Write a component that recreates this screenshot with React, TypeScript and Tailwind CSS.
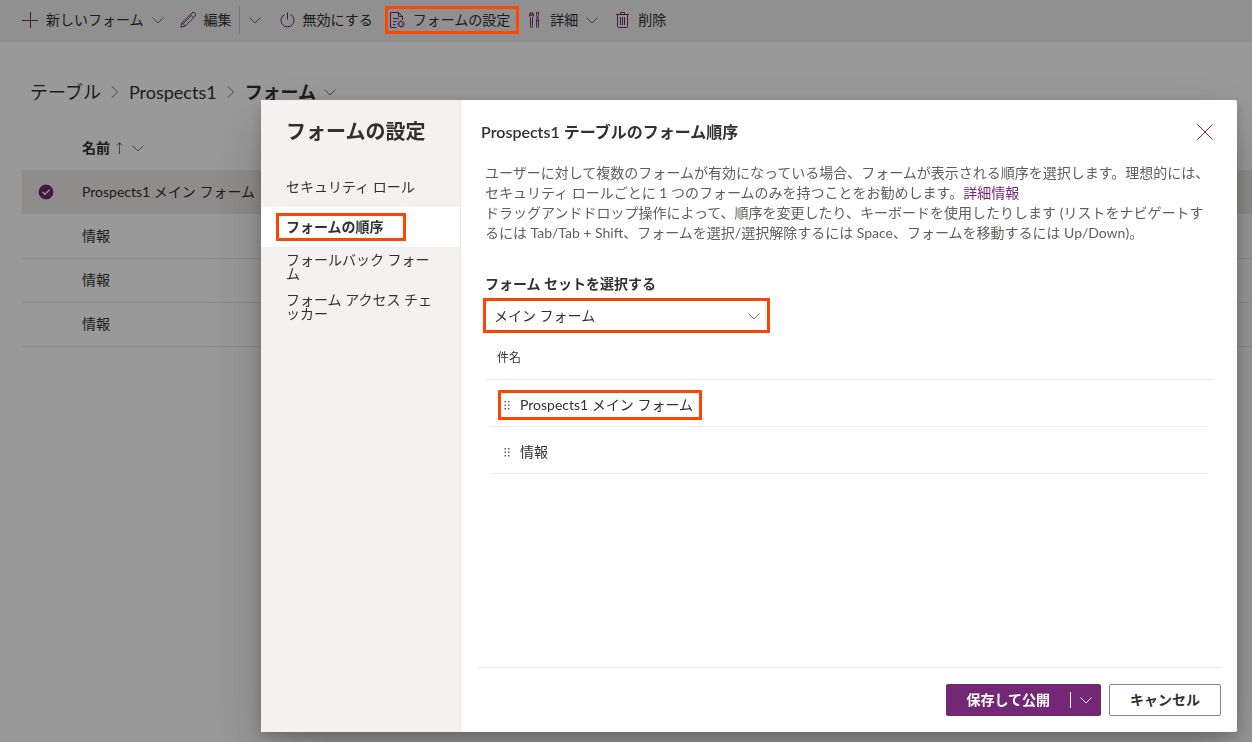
import React, { useState } from 'react';

const NAV_ITEMS = ['セキュリティ ロール', 'フォームの順序', 'フォールバック フォーム', 'フォーム アクセス チェッカー'];
const TABLE_FORMS = ['Prospects1 メイン フォーム', '情報', '情報', '情報'];
const ORDER = ['Prospects1 メイン フォーム', '情報'];

// Orange callout frame drawn above whatever it marks
function Callout({ className }: { className: string }) {
  return <span aria-hidden="true" className={`pointer-events-none absolute z-20 border-3 border-[#ff4500] ${className}`} />;
}

function Icon({ children, className = 'size-4' }: { children: React.ReactNode; className?: string }) {
  return (
    <svg viewBox="0 0 16 16" fill="none" stroke="currentColor" strokeWidth="1" className={`shrink-0 ${className}`} aria-hidden="true">
      {children}
    </svg>
  );
}

function Chevron({ className = 'text-[#797775]' }: { className?: string }) {
  return (
    <svg viewBox="0 0 12 12" fill="none" stroke="currentColor" className={`size-3 shrink-0 ${className}`} aria-hidden="true">
      <path d="M.5 3.5 6 9l5.5-5.5" />
    </svg>
  );
}

function CrumbArrow() {
  return (
    <svg viewBox="0 0 8 12" fill="none" stroke="currentColor" className="h-3 w-2 shrink-0 text-[#797775]" aria-hidden="true">
      <path d="M1 .5 6.5 6 1 11.5" />
    </svg>
  );
}

function DragDots() {
  return (
    <svg viewBox="0 0 6 10" fill="currentColor" className="h-2.5 w-1.5 shrink-0 text-[#605e5c]" aria-hidden="true">
      <path d="M.5 1h1.500v1.500H.5zM4 1h1.500v1.500H4zM.5 4.500h1.500V6H.5zM4 4.500h1.500V6H4zM.5 8h1.500v1.500H.5zM4 8h1.500v1.500H4z" />
    </svg>
  );
}

function CommandButton({ icon, label, menu }: { icon: React.ReactNode; label: string; menu?: boolean }) {
  return (
    <button type="button" className="flex h-7 items-center gap-2 px-2 whitespace-nowrap">
      <span className="flex text-[#742774]">{icon}</span>
      {label}
      {menu && <Chevron />}
    </button>
  );
}

function CommandBar() {
  return (
    <header className="flex h-[42px] items-center bg-[#f1f0f0] px-3.5 pb-0.5">
      <CommandButton label="新しいフォーム" menu icon={<Icon><path d="M8.5 0v16M0 8.5h16" /></Icon>} />
      <CommandButton
        label="編集"
        icon={
          <Icon>
            <path d="M.8 15.2 2 10.7 11.7 1a1.9 1.9 0 0 1 2.7 0l.6.6a1.9 1.9 0 0 1 0 2.7L5.3 14 .8 15.2zM2 10.7 5.3 14M10.3 2.4l3.3 3.3M3.2 11.8l8.7-8.7" />
          </Icon>
        }
      />
      <button type="button" aria-label="編集オプション" className="-ml-px flex h-7 w-8 items-center justify-center border-l border-[#c8c6c4]">
        <Chevron />
      </button>
      <CommandButton
        label="無効にする"
        icon={<Icon><path d="M8.500 .5v7M5.500 2.600a6.500 6.500 0 1 0 6 0" /></Icon>}
      />
      <div className="relative">
        <CommandButton
          label="フォームの設定"
          icon={
            <Icon>
              <path d="M7.5 15.5h-6V.5h8l4 4v3.5M9.5.5v4h4M4 6.5h6M4 9.5h3.5M4 12.5h2.5" />
              <circle cx="12" cy="12" r="2.4" />
              <path d="M12 8.2v1.4M12 14.4v1.4M8.2 12h1.4M14.4 12h1.4M9.3 9.3l1 1M13.7 13.7l1 1M14.7 9.3l-1 1M10.3 13.7l-1 1" />
            </Icon>
          }
        />
        <Callout className="inset-y-0 -right-px left-1" />
      </div>
      <CommandButton
        label="詳細"
        menu
        icon={
          <Icon>
            <path d="M4.800.5C3.200 1.200 3 4.500 4.500 5.500v9a1 1 0 0 0 2 0v-9C8 4.500 7.800 1.200 6.200.5v3H4.800zM10.500.5h2v3l-.5 1v4h-1v-4l-.5-1zM9.800 8.500h3.400M10.500 8.500v6a1 1 0 0 0 2 0v-6" />
          </Icon>
        }
      />
      <CommandButton
        label="削除"
        icon={
          <Icon>
            <path d="M2 2.500h13M6.500 2.500v-2h4v2M3.500 2.500v12a1 1 0 0 0 1 1h8a1 1 0 0 0 1-1v-12M6.500 5v8M8.500 5v8M10.500 5v8" />
          </Icon>
        }
      />
    </header>
  );
}

function FormsPage() {
  return (
    <main>
      <nav className="flex items-center px-[30px] pt-9 text-lg leading-7 whitespace-nowrap">
        <a href="#tables">テーブル</a>
        <span className="px-2.5"><CrumbArrow /></span>
        <a href="#prospects">Prospects1</a>
        <span className="px-2.5"><CrumbArrow /></span>
        <button type="button" className="flex items-center gap-2 font-bold">
          フォーム
          <Chevron />
        </button>
      </nav>
      <div className="pt-5 pl-[22px]">
        <table className="w-full border-collapse text-left">
          <thead>
            <tr className="h-11">
              <th className="w-[60px]" aria-label="選択" />
              <th className="font-bold">
                <span className="flex items-center gap-1.5">
                  名前
                  <svg viewBox="0 0 8 12" fill="none" stroke="currentColor" className="h-3 w-2 text-[#797775]" aria-hidden="true">
                    <path d="M3.500 12V1M1 3.500l2.500-3 2.500 3" />
                  </svg>
                  <Chevron className="ml-0.5 text-[#797775]" />
                </span>
              </th>
            </tr>
          </thead>
          <tbody>
            {TABLE_FORMS.map((name, i) => (
              <tr key={i} className={i === 0 ? 'h-11 bg-[#edebe9]' : 'h-11 border-b border-[#edebe9]'}>
                <td className="pl-4">
                  {i === 0 && (
                    <svg viewBox="0 0 16 16" className="size-4" role="img" aria-label="選択済み">
                      <circle cx="8" cy="8" r="8" fill="#fff" />
                      <circle cx="8" cy="8" r="7.500" fill="#742774" />
                      <path d="M4.500 8 7 10.300l4.500-4.500" fill="none" stroke="#fff" strokeWidth="1.300" />
                    </svg>
                  )}
                </td>
                <td>{name}</td>
              </tr>
            ))}
          </tbody>
        </table>
      </div>
    </main>
  );
}

function SettingsDialog() {
  const [active, setActive] = useState(1);

  return (
    <div className="fixed inset-0 z-10 flex justify-end bg-black/40 pt-[100px] pr-[15px] pb-2.5">
      <section
        role="dialog"
        aria-label="フォームの設定"
        className="flex w-full max-w-[976px] rounded-xs bg-white shadow-[0_26px_58px_rgba(0,0,0,0.22),0_5px_14px_rgba(0,0,0,0.18)]"
      >
        <aside className="w-[200px] shrink-0 border-r border-[#e9e8e7] bg-[#f3f2f1]">
          <h2 className="px-[25px] pt-4 pb-[21px] text-xl leading-[30px] font-bold whitespace-nowrap">フォームの設定</h2>
          <ul>
            {NAV_ITEMS.map((item, i) => (
              <li key={item} className="relative">
                <button
                  type="button"
                  onClick={() => setActive(i)}
                  className={`flex h-10 w-full items-center px-[25px] text-left leading-[14px] ${active === i ? 'bg-white font-bold' : ''}`}
                >
                  {item}
                </button>
                {i === 1 && <Callout className="top-1.5 left-[15px] h-7 w-[130px]" />}
              </li>
            ))}
          </ul>
        </aside>

        <div className="flex min-w-0 flex-1 flex-col">
          <div className="flex h-[63px] items-center justify-between pr-6 pl-5">
            <h3 className="text-base leading-6 font-semibold">Prospects1 テーブルのフォーム順序</h3>
            <button type="button" aria-label="閉じる" className="text-[#742774]">
              <Icon><path d="m.5.5 15 15M15.500.5l-15 15" /></Icon>
            </button>
          </div>

          <div className="flex-1 px-6">
            <p className="text-[#605e5c]">
              ユーザーに対して複数のフォームが有効になっている場合、フォームが表示される順序を選択します。理想的には、セキュリティ ロールごとに 1 つのフォームのみを持つことをお勧めします。
              <a href="#more" className="text-[#742774]">詳細情報</a>
              <br />
              ドラッグアンドドロップ操作によって、順序を変更したり、キーボードを使用したりします (リストをナビゲートするには Tab/Tab + Shift、フォームを選択/選択解除するには Space、フォームを移動するには Up/Down)。
            </p>

            <label htmlFor="form-set" className="mt-[31px] mb-1.5 block font-bold">フォーム セットを選択する</label>
            <div className="relative w-[283px]">
              <select id="form-set" className="h-8 w-full appearance-none border border-[#605e5c] bg-white px-2">
                <option>メイン フォーム</option>
              </select>
              <span className="pointer-events-none absolute inset-y-0 right-2 flex items-center">
                <Chevron />
              </span>
              <Callout className="-inset-x-0.5 -top-0.5 -bottom-px" />
            </div>

            <table className="mt-[3px] w-full border-collapse text-left">
              <thead>
                <tr>
                  <th className="h-11 border-b border-[#edebe9] px-3 pt-0.5 text-xs font-normal">件名</th>
                </tr>
              </thead>
              <tbody>
                {ORDER.map((name, i) => (
                  <tr key={name}>
                    <td className="px-[5px]">
                      <div className="flex h-[47px] items-center border-b border-[#edebe9] px-2 pt-1">
                        <span className="relative flex items-center gap-2.5 px-1.5">
                          <DragDots />
                          <span className="leading-[30px]">{name}</span>
                          {i === 0 && <Callout className="inset-y-0 -right-[3px] left-0" />}
                        </span>
                      </div>
                    </td>
                  </tr>
                ))}
              </tbody>
            </table>
          </div>

          <footer className="mx-4 flex justify-end gap-2 border-t border-[#edebe9] py-4">
            <div className="flex h-8 items-center rounded-xs bg-[#742774] font-bold text-white">
              <button type="button" className="h-full px-5">保存して公開</button>
              <span className="h-4 w-px bg-white" />
              <button type="button" aria-label="その他の保存オプション" className="flex h-full w-[30px] items-center justify-center">
                <Chevron className="text-white" />
              </button>
            </div>
            <button type="button" className="h-8 w-28 rounded-xs border border-[#8a8886] bg-white font-bold">キャンセル</button>
          </footer>
        </div>
      </section>
    </div>
  );
}

export default function App() {
  return (
    <div lang="ja" className="min-h-screen bg-white font-[Lato,'Noto_Sans_CJK_JP',sans-serif] text-sm leading-5 text-[#323130]">
      <CommandBar />
      <FormsPage />
      <SettingsDialog />
    </div>
  );
}
